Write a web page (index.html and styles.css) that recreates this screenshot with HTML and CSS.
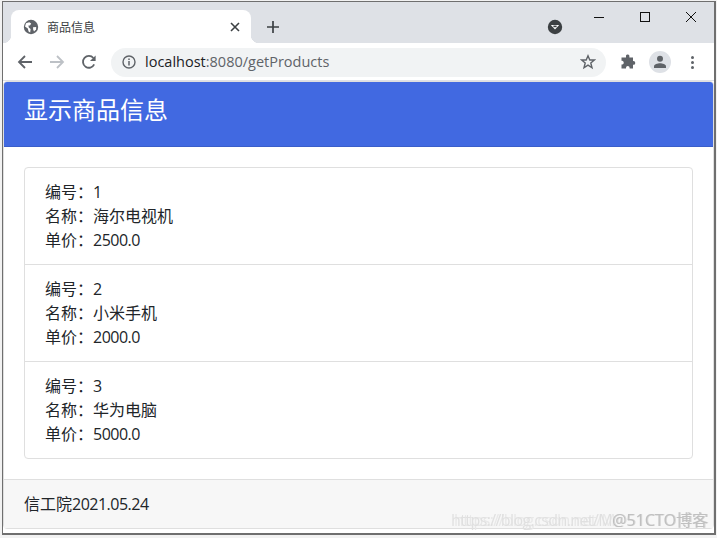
FILE: index.html
```html
<!doctype html>
<html lang="zh-CN">
<head>
    <meta charset="UTF-8">
    <meta name="viewport" content="width=device-width, initial-scale=1.0">
    <title>商品信息</title>
    <link rel="stylesheet" href="styles.css">
</head>
<body>
    <div class="window">
        <div class="tab-strip">
            <div class="tab">
                <svg class="globe" width="16" height="16" viewBox="0 0 16 16">
                    <circle cx="8" cy="8" r="7.2" fill="#5f6368"/>
                    <path d="M3 4.2 6.2 3.2 8.2 4.6 7 6.4 5.4 6.6 5.8 8.6 7.6 10 7.2 13.4 5.6 12.4 4.8 9.6 2 7.4Z" fill="#fff"/>
                    <path d="M10 8.2 13.2 8 13 10.6 11 12.6 10.2 10.4Z" fill="#fff"/>
                </svg>
                <span class="tab-title">商品信息</span>
                <svg class="tab-close" width="10" height="10" viewBox="0 0 10 10">
                    <path d="M1 1 9 9M9 1 1 9" stroke="#3c4043" stroke-width="1.6" fill="none"/>
                </svg>
            </div>
            <svg class="new-tab" width="14" height="14" viewBox="0 0 14 14">
                <path d="M7 1V13M1 7H13" stroke="#3c4043" stroke-width="1.7" fill="none"/>
            </svg>
            <div class="profile-dot">
                <svg width="16" height="16" viewBox="0 0 16 16">
                    <circle cx="8" cy="8" r="7.2" fill="#3c4043"/>
                    <path d="M3.8 6H12.2L8 10.6Z" fill="#fff"/>
                    <path d="M6.4 8.2H9.6V6.6H6.4Z" fill="#3c4043"/>
                </svg>
            </div>
            <div class="win-controls">
                <div class="win-btn">
                    <svg width="12" height="12" viewBox="0 0 12 12"><path d="M1 6.5H11" stroke="#111" fill="none"/></svg>
                </div>
                <div class="win-btn">
                    <svg width="12" height="12" viewBox="0 0 12 12"><rect x="1.500" y="1.500" width="9" height="9" stroke="#111" fill="none"/></svg>
                </div>
                <div class="win-btn">
                    <svg width="12" height="12" viewBox="0 0 12 12"><path d="M1 1 11 11M11 1 1 11" stroke="#111" fill="none"/></svg>
                </div>
            </div>
        </div>

        <div class="toolbar">
            <svg class="nav-icon" width="16" height="16" viewBox="0 0 16 16">
                <path d="M15 8H2M8 2 2 8 8 14" stroke="#5f6368" stroke-width="1.8" fill="none"/>
            </svg>
            <svg class="nav-icon" width="16" height="16" viewBox="0 0 16 16">
                <path d="M1 8H14M8 2 14 8 8 14" stroke="#bdc1c6" stroke-width="1.8" fill="none"/>
            </svg>
            <svg class="nav-icon" width="16" height="16" viewBox="0 0 16 16">
                <path d="M13.200 10.400A5.900 5.900 0 1 1 12.400 4" stroke="#5f6368" stroke-width="1.8" fill="none"/>
                <path d="M14.600 1.400V7H9Z" fill="#5f6368"/>
            </svg>
            <div class="omnibox">
                <svg class="info-icon" width="14" height="14" viewBox="0 0 14 14">
                    <circle cx="7" cy="7" r="6" stroke="#5f6368" stroke-width="1.4" fill="none"/>
                    <path d="M7 6V10.400M7 3.400V5" stroke="#5f6368" stroke-width="1.5" fill="none"/>
                </svg>
                <div class="url"><span class="url-host">localhost</span>:8080/getProducts</div>
                <svg class="star-icon" width="16" height="16" viewBox="0 0 16 16">
                    <path d="M8 1.800 9.800 6H14.400L10.800 9 12 13.800 8 11.200 4 13.800 5.200 9 1.600 6H6.200Z" stroke="#5f6368" stroke-width="1.4" fill="none"/>
                </svg>
            </div>
            <svg class="puzzle" width="16" height="16" viewBox="0 0 16 16">
                <path d="M6 1.500A1.800 1.800 0 0 1 9.400 2.600V3.500H13V7H13.400A1.900 1.900 0 0 1 13.400 10.800H13V14.500H9.600V13.800A1.800 1.800 0 0 0 6 13.800V14.500H1.500V10.500H2.300A1.900 1.900 0 0 0 2.300 6.800H1.500V3.500H6Z" fill="#5f6368"/>
            </svg>
            <div class="avatar">
                <svg width="14" height="14" viewBox="0 0 14 14">
                    <circle cx="7" cy="3.800" r="3" fill="#5f6368"/>
                    <path d="M1 13V11.200C1 9.200 4.600 8.200 7 8.200S13 9.200 13 11.200V13Z" fill="#5f6368"/>
                </svg>
            </div>
            <div class="menu-dots"><i></i><i></i><i></i></div>
        </div>

        <div class="card">
            <div class="card-header">显示商品信息</div>
            <div class="card-body">
                <ul class="list-group">
                    <li class="list-item">
                        <div>编号：<span class="num">1</span></div>
                        <div>名称：海尔电视机</div>
                        <div>单价：<span class="num">2500.0</span></div>
                    </li>
                    <li class="list-item">
                        <div>编号：<span class="num">2</span></div>
                        <div>名称：小米手机</div>
                        <div>单价：<span class="num">2000.0</span></div>
                    </li>
                    <li class="list-item">
                        <div>编号：<span class="num">3</span></div>
                        <div>名称：华为电脑</div>
                        <div>单价：<span class="num">5000.0</span></div>
                    </li>
                </ul>
            </div>
            <div class="card-footer">信工院<span class="num">2021.05.24</span></div>
        </div>

        <div class="watermark">
            <span class="wm-csdn">https://blog.csdn.net/M</span>
            <span class="wm-cto">@51CTO博客</span>
        </div>
    </div>
</body>
</html>
```

FILE: styles.css
```css
* {
    box-sizing: border-box;
}

body {
    margin: 0;
    height: 538px;
    padding: 1px 1px 3px 2px;
    overflow: hidden;
    background: #f2f2f2;
    font-family: "Open Sans", "Noto Sans CJK SC", sans-serif;
    color: #212529;
}

.window {
    position: relative;
    display: flex;
    flex-direction: column;
    height: 100%;
    border: 1px solid #6f6f6f;
    border-width: 1px 2px 2px 1px;
    background: #fff;
}

/* browser chrome */
.tab-strip {
    flex: none;
    display: flex;
    height: 41px;
    padding-left: 8px;
    background: #dee1e6;
}

.tab {
    position: relative;
    display: flex;
    align-items: center;
    width: 240px;
    margin-top: 8px;
    padding: 0 12px;
    background: #fff;
    border-radius: 8px 8px 0 0;
}

.tab::before,
.tab::after {
    content: "";
    position: absolute;
    bottom: 0;
    width: 8px;
    height: 8px;
}

.tab::before {
    left: -8px;
    background: radial-gradient(circle at 0 0, #dee1e6 8px, #fff 8.5px);
}

.tab::after {
    right: -8px;
    background: radial-gradient(circle at 100% 0, #dee1e6 8px, #fff 8.5px);
}

.globe {
    flex: none;
}

.tab-title {
    flex: 1;
    margin-left: 8px;
    font-size: 12px;
    color: #3c4043;
}

.tab-close {
    margin-right: -1px;
}

.new-tab {
    margin: 18px 0 0 15px;
}

.profile-dot {
    margin: 17px 13px 0 auto;
    height: 16px;
    width: 16px;
}

.profile-dot svg,
.avatar svg {
    display: block;
}

.win-controls {
    display: flex;
    height: 29px;
}

.win-btn {
    display: flex;
    align-items: center;
    justify-content: center;
    width: 46px;
}

.toolbar {
    flex: none;
    display: flex;
    align-items: center;
    height: 38px;
    padding: 1px 0 0 14px;
    background: #fff;
    border-bottom: 1px solid #dee1e6;
}

.nav-icon {
    flex: none;
    margin-right: 16px;
}

.omnibox {
    display: flex;
    align-items: center;
    width: 495px;
    height: 29px;
    margin-left: -2px;
    padding: 0 10px 0 11px;
    border-radius: 15px;
    background: #f1f3f4;
}

.url {
    flex: 1;
    margin-left: 9px;
    padding-bottom: 2px;
    font-size: 14.5px;
    color: #5f6368;
}

.url-host {
    color: #202124;
}

.puzzle {
    margin-left: 14px;
}

.avatar {
    display: flex;
    align-items: center;
    justify-content: center;
    width: 22px;
    height: 22px;
    margin-left: 13px;
    border-radius: 50%;
    background: #dee1e6;
}

.menu-dots {
    display: flex;
    flex-direction: column;
    gap: 2px;
    margin-left: 20px;
}

.menu-dots i {
    display: block;
    width: 3px;
    height: 3px;
    border-radius: 50%;
    background: #5f6368;
}

/* page content */
.card {
    flex: none;
    border: 1px solid #dfdfdf;
    border-radius: 4px;
    font-size: 16px;
    line-height: 24px;
}

.card-header {
    height: 65px;
    padding: 12px 20px;
    background: #4169e1;
    border-bottom: 1px solid #3a5ec9;
    color: #fff;
    font-size: 24px;
    line-height: 32px;
    border-radius: 3px 3px 0 0;
}

.card-body {
    padding: 20px;
}

.list-group {
    margin: 0;
    padding: 0;
    list-style: none;
    border: 1px solid #dfdfdf;
    border-radius: 4px;
}

.list-item {
    padding: 12px 20px;
    border-top: 1px solid #dfdfdf;
}

.list-item:first-child {
    border-top: 0;
}

.num {
    letter-spacing: -0.5px;
}

.card-footer {
    height: 49px;
    padding: 12px 20px;
    border-top: 1px solid #dfdfdf;
    background: #f7f7f7;
}

.watermark {
    position: absolute;
    right: 6px;
    bottom: 3px;
    display: flex;
    font-size: 16px;
    line-height: 20px;
    white-space: nowrap;
    filter: blur(0.7px);
}

.wm-csdn {
    color: #e0e0e0;
    letter-spacing: -0.6px;
    text-shadow: 3px 0 #e8e8e8;
}

.wm-cto {
    color: #c0c0c0;
    text-shadow: 1px 0 #d8d8d8;
}
```
